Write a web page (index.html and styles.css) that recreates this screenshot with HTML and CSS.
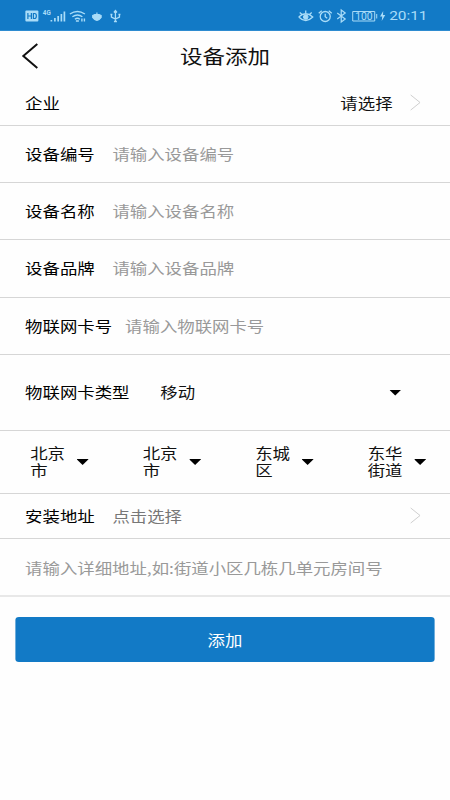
FILE: index.html
```html
<!DOCTYPE html>
<html lang="zh-CN">
<head>
<meta charset="utf-8">
<title>设备添加</title>
<link rel="stylesheet" href="styles.css">
</head>
<body>
<div class="screen">
  <div class="status">
    <svg class="status-left" viewBox="0 0 100 20" preserveAspectRatio="none">
      <rect x="0.500" y="4.500" width="13" height="11" rx="1" fill="#a9dcf8" stroke="none"/>
      <path d="M3 7v6M6.500 7v6M3 10h3.500M8.500 7.500v5h1.200q1.800 0 1.800-2.500T9.700 7.500z" stroke="#127ac6" stroke-width="1.200"/>
      <text x="18" y="9" class="net" textLength="8" lengthAdjust="spacingAndGlyphs">4G</text>
      <path d="M26.500 14v1.500M30 12v3.500M33.300 10v5.500M36.500 8v7.500M39.500 5.500v10" stroke-width="1.700"/>
      <path d="M45 8q7.500-5 15 0M47.500 10.800q5-3.500 10 0M50 13.200q2.500-1.800 5 0M51 15h3M57 12.500v3M59.500 12.500v3" stroke-width="1.400"/>
      <path d="M67.800 9.500q4.200-2.500 8.400 0v2q-4.200 6-8.400 0zM72 9V6.500" fill="#a9dcf8" stroke-width="1.200"/>
      <path d="M90.500 5v11M86.500 8.500v2.500l4 2 4-2V8.500M89 6.500 90.500 4.500l1.500 2M85.500 8.500h2M93.500 8.500h2M89 15.500h3" stroke-width="1.300"/>
    </svg>
    <div class="status-right">
      <svg class="status-icons" viewBox="0 0 88 20" preserveAspectRatio="none">
        <path d="M1.500 11q7-6.500 14 0-7 7-14 0M2.500 6.500l2 1.800M8.500 4.500V7M14.500 6.500l-2 1.800" stroke-width="1.300"/>
        <circle cx="8.500" cy="11" r="2.300" fill="#a9dcf8"/>
        <circle cx="28" cy="10.500" r="5" stroke-width="1.300"/>
        <path d="M28 7.700v3l2 1.500M21.500 7.200l3-2.500M34.500 7.200l-3-2.500" stroke-width="1.300"/>
        <path d="M40 7l8 6-4 3v-12l4 3-8 6" stroke-width="1.200"/>
        <path d="M55.500 5.500h22v9.500h-22zM79.500 8v4.500" stroke-width="1"/>
        <text x="58" y="14" class="charge" textLength="17.500" lengthAdjust="spacingAndGlyphs">100</text>
        <path d="M86 5l-3.200 5.500h2.200l-.5 4.500 3.500-6h-2.200z" fill="#a9dcf8" stroke="none"/>
      </svg>
      <span class="clock">20:11</span>
    </div>
  </div>

  <header class="header">
    <svg class="back" viewBox="0 0 18 28" preserveAspectRatio="none"><path d="M16 2 2 14 16 26"/></svg>
    <h1>设备添加</h1>
  </header>

  <main>
    <div class="row company">
      <span class="label">企业</span><span class="value end">请选择</span>
      <svg class="chevron" viewBox="0 0 12 18" preserveAspectRatio="none"><path d="M1 1 11 9 1 17"/></svg>
    </div>
    <div class="row field"><span class="label">设备编号</span><span class="hint">请输入设备编号</span></div>
    <div class="row field"><span class="label">设备名称</span><span class="hint">请输入设备名称</span></div>
    <div class="row field tall"><span class="label">设备品牌</span><span class="hint">请输入设备品牌</span></div>
    <div class="row field card"><span class="label">物联网卡号</span><span class="hint">请输入物联网卡号</span></div>
    <div class="row type">
      <span class="label">物联网卡类型</span><span class="value">移动</span><i class="caret"></i>
    </div>
    <div class="regions">
      <div class="region"><span>北京市</span><i class="caret"></i></div>
      <div class="region"><span>北京市</span><i class="caret"></i></div>
      <div class="region"><span>东城区</span><i class="caret"></i></div>
      <div class="region"><span>东华街道</span><i class="caret"></i></div>
    </div>
    <div class="row address">
      <span class="label">安装地址</span><span class="hint dark">点击选择</span>
      <svg class="chevron" viewBox="0 0 12 18" preserveAspectRatio="none"><path d="M1 1 11 9 1 17"/></svg>
    </div>
    <div class="row detail"><span class="hint">请输入详细地址,如:街道小区几栋几单元房间号</span></div>
    <button class="submit">添加</button>
  </main>
</div>
</body>
</html>
```

FILE: styles.css
```css
* { box-sizing: border-box; }
html, body { margin: 0; height: 100%; overflow: hidden; background: #fefefe; }

/* The 380-unit layout is stretched horizontally to fill 450px. */
.screen {
  width: 380px;
  height: 800px;
  transform: scaleX(1.18421);
  transform-origin: 0 0;
  font-family: "Noto Sans CJK SC", sans-serif;
  font-size: 14.7px;
  line-height: 17px;
  color: #111;
}

svg { fill: none; display: block; flex: none; }

.status {
  height: 31px;
  background: #127ac6;
  border-bottom: 1px solid #2d8bd0;
  display: flex;
  justify-content: space-between;
  align-items: center;
  padding: 1px 19px 0 20.800px;
}
.status svg { stroke: #a9dcf8; }
.status-left { width: 84.5px; height: 20px; }
.status-right { display: flex; align-items: center; }
.status-icons { width: 74.3px; height: 20px; }
.net { font: 700 7px Roboto, sans-serif; fill: #a9dcf8; stroke: none; }
.charge { font: 10px Roboto, sans-serif; fill: #a9dcf8; stroke: none; }
.clock { font: 13px/20px Roboto, sans-serif; color: #a9dcf8; margin-left: 3px; padding-top: 1px; }

.header {
  height: 50px;
  display: grid;
  grid-template-columns: 60px 1fr 60px;
  align-items: center;
}
.back { width: 15.2px; height: 28px; margin-left: 18px; stroke: #111; stroke-width: 2; }
h1 { margin: 0; font-size: 19px; line-height: 28px; font-weight: 400; text-align: center; }

.row {
  display: flex;
  align-items: center;
  border-bottom: 1px solid #d6d6d6;
  padding: 0 25px 0 21.200px;
  white-space: nowrap;
}
.row > span { padding-bottom: 2px; }
.label { color: #000; }
.company { height: 45px; }
.field { height: 57px; }
.tall { height: 58px; }
.hint { margin-left: 15px; color: #999; }
.card .hint { margin-left: 11px; }
.dark { color: #777; }
.end { margin-left: auto; }
.chevron { width: 9.500px; height: 17px; margin-bottom: 2px; stroke: #ccc; stroke-width: 1; }
.end + .chevron { margin-left: 14px; }
.type { height: 76px; padding-right: 41px; }
.type .value { margin-left: 26px; }
.caret {
  flex: none;
  width: 10.500px;
  height: 6px;
  background: #000;
  clip-path: polygon(0 0, 100% 0, 50% 100%);
}
.type .caret { margin-left: auto; }

.regions {
  height: 63px;
  display: grid;
  grid-template-columns: repeat(4, 1fr);
  border-bottom: 1px solid #d6d6d6;
}
.region { display: flex; align-items: center; padding-left: 25.500px; }
.region span { width: 30px; padding-bottom: 2px; }
.region .caret { margin-left: 9px; }

.address { height: 45px; }
.address .chevron { margin-left: auto; }
.detail { height: 58px; border-bottom: 2px solid #e8e8e8; }
.detail > .hint { margin-left: 0; padding-bottom: 0; }

.submit {
  display: block;
  width: 354.600px;
  height: 45px;
  margin: 20px auto 0;
  padding: 0 0 1px;
  border: 0;
  border-radius: 3px;
  background: #127ac6;
  color: #fff;
  font: inherit;
}
```
